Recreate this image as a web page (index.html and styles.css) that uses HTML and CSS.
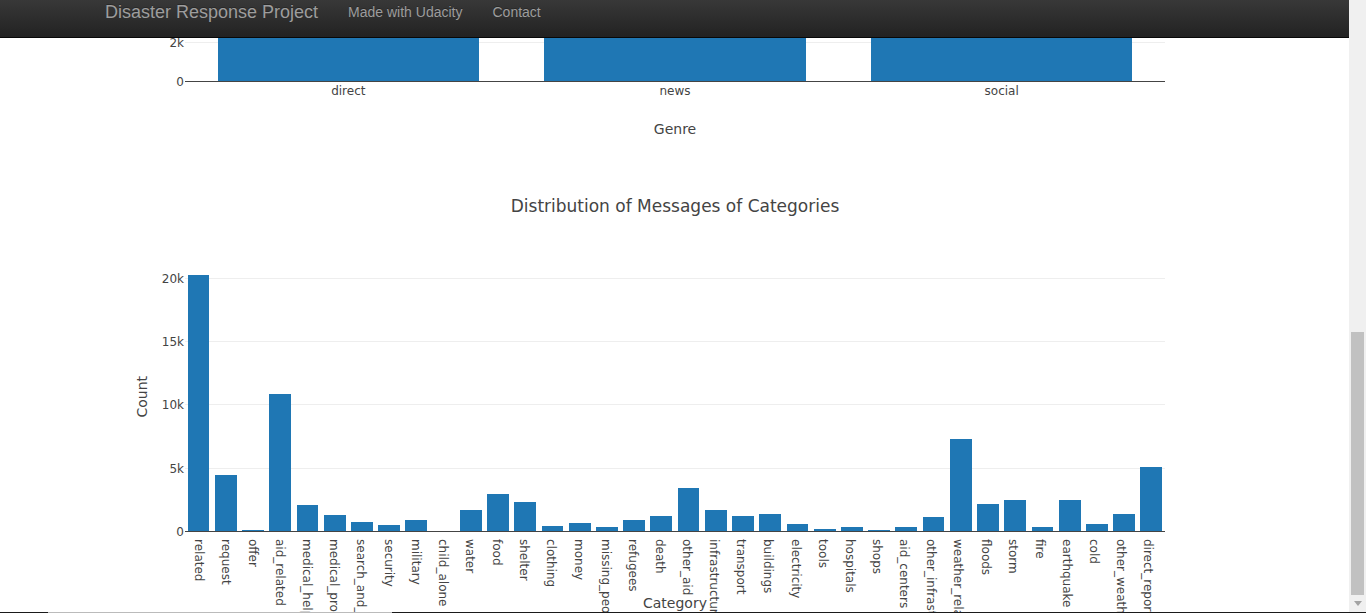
FILE: index.html
```html
<!DOCTYPE html>
<html lang="en">
<head>
<meta charset="utf-8">
<title>Disasters</title>
<link rel="stylesheet" href="styles.css">
</head>
<body>
<div class="window">
  <div class="page">
    <nav class="navbar">
      <div class="container navbar-row">
        <a class="brand" href="#">Disaster Response Project</a>
        <a class="nav-link" href="#">Made with Udacity</a>
        <a class="nav-link" href="#">Contact</a>
      </div>
    </nav>
    <main class="container">
      <section class="chart chart-genre" aria-label="Distribution of Message Genres">
        <div class="scale scale-genre">
          <div class="tick"><span>2k</span></div>
          <div class="tick zero"><span>0</span></div>
        </div>
        <div class="bars bars-genre">
          <i></i><i></i><i></i>
        </div>
        <div class="genre-labels">
          <span>direct</span><span>news</span><span>social</span>
        </div>
        <div class="axis-title genre-title">Genre</div>
      </section>

      <section class="chart chart-category">
        <h2 class="chart-title">Distribution of Messages of Categories</h2>
        <div class="count-title">Count</div>
        <div class="scale scale-category">
          <div class="tick"><span>20k</span></div>
          <div class="tick"><span>15k</span></div>
          <div class="tick"><span>10k</span></div>
          <div class="tick"><span>5k</span></div>
          <div class="tick zero"><span>0</span></div>
        </div>
        <div class="bars bars-category">
          <i style="--v:20240"></i><i style="--v:4440"></i><i style="--v:118"></i><i style="--v:10830"></i>
          <i style="--v:2065"></i><i style="--v:1297"></i><i style="--v:718"></i><i style="--v:467"></i>
          <i style="--v:857"></i><i style="--v:0"></i><i style="--v:1660"></i><i style="--v:2905"></i>
          <i style="--v:2300"></i><i style="--v:401"></i><i style="--v:598"></i><i style="--v:295"></i>
          <i style="--v:869"></i><i style="--v:1184"></i><i style="--v:3417"></i><i style="--v:1690"></i>
          <i style="--v:1194"></i><i style="--v:1326"></i><i style="--v:528"></i><i style="--v:158"></i>
          <i style="--v:280"></i><i style="--v:118"></i><i style="--v:306"></i><i style="--v:1140"></i>
          <i style="--v:7250"></i><i style="--v:2140"></i><i style="--v:2430"></i><i style="--v:280"></i>
          <i style="--v:2441"></i><i style="--v:525"></i><i style="--v:1364"></i><i style="--v:5030"></i>
        </div>
        <div class="category-labels">
          <span>related</span><span>request</span><span>offer</span><span>aid_related</span>
          <span>medical_help</span><span>medical_products</span><span>search_and_rescue</span><span>security</span>
          <span>military</span><span>child_alone</span><span>water</span><span>food</span>
          <span>shelter</span><span>clothing</span><span>money</span><span>missing_people</span>
          <span>refugees</span><span>death</span><span>other_aid</span><span>infrastructure_related</span>
          <span>transport</span><span>buildings</span><span>electricity</span><span>tools</span>
          <span>hospitals</span><span>shops</span><span>aid_centers</span><span>other_infrastructure</span>
          <span>weather_related</span><span>floods</span><span>storm</span><span>fire</span>
          <span>earthquake</span><span>cold</span><span>other_weather</span><span>direct_report</span>
        </div>
        <div class="axis-title category-title">Category</div>
      </section>
    </main>
  </div>
  <div class="scrollbar" aria-hidden="true">
    <div class="track-above"></div>
    <div class="thumb"></div>
    <div class="scroll-down">
      <svg width="8" height="5" viewBox="0 0 8 5"><path d="M0 0h8L4 5z" fill="#a3a3a3"/></svg>
    </div>
  </div>
</div>
<div class="window-edge"></div>
</body>
</html>
```
FILE: styles.css
```css
* {
  box-sizing: border-box;
}

body {
  display: flex;
  flex-direction: column;
  height: 100vh;
  margin: 0;
  overflow: hidden;
  background: #fff;
  color: #444;
  font-family: "DejaVu Sans", Verdana, sans-serif;
  font-size: 12px;
  line-height: 16px;
}

.window {
  display: flex;
  flex: 1;
  min-height: 0;
}

.page {
  flex: 1;
  min-width: 0;
  overflow: hidden;
}

.container {
  max-width: 1171px;
  margin: 0 auto;
  padding: 0 15px 0 16px;
}

/* Navigation */

.navbar {
  border-bottom: 1px solid #080808;
  background: linear-gradient(#383838, #222);
  font-family: "Liberation Sans", Arial, sans-serif;
}

.navbar-row {
  display: flex;
  gap: 30px;
  padding-top: 2px;
  padding-bottom: 15px;
}

.navbar a {
  color: #9d9d9d;
  font-size: 14px;
  line-height: 20px;
  text-decoration: none;
  text-shadow: 0 -1px 0 rgba(0, 0, 0, 0.25);
}

.navbar .brand {
  font-size: 18px;
}

/* Charts */

.chart {
  display: grid;
  grid-template-columns: 80px minmax(0, 1fr) 80px;
  overflow: hidden;
}

.chart-genre {
  grid-template-rows: 44px auto auto;
  padding-bottom: 24px;
}

.chart-category {
  grid-template-rows: 100px 270px 80px;
}

.chart-title {
  grid-area: 1 / 2;
  margin: 0;
  padding-top: 34px;
  font-size: 17px;
  font-weight: 400;
  line-height: 20px;
  text-align: center;
}

.axis-title {
  font-size: 14px;
  line-height: 18px;
  text-align: center;
}

.scale {
  display: grid;
}

.scale-genre {
  grid-area: 1 / 1 / 2 / 3;
  grid-template-rows: 5px 39px;
}

.scale-category {
  grid-area: 2 / 1 / 3 / 3;
  grid-template-rows: 1340fr repeat(4, 5000fr);
}

.tick {
  display: grid;
  grid-template-rows: 100%;
  grid-template-columns: 79px 1px minmax(0, 1fr);
  align-items: end;
}

.tick span {
  margin-bottom: -8px;
  text-align: right;
}

.tick::after {
  grid-column: 3;
  height: 1px;
  background: #eee;
  content: "";
}

.tick.zero::after {
  background: #444;
}

.bars {
  display: grid;
  align-items: end;
  justify-items: center;
  padding-bottom: 1px;
}

.bars i {
  width: 80%;
  background: #1f77b4;
}

.bars-genre {
  grid-area: 1 / 2;
  grid-template-columns: repeat(3, 1fr);
}

.bars-genre i {
  height: 100%;
}

.bars-category {
  grid-area: 2 / 2;
  grid-template-columns: repeat(36, 1fr);
}

.bars-category i {
  height: calc(var(--v) / 21300 * 100%);
}

.genre-labels {
  display: grid;
  grid-area: 2 / 2;
  grid-template-columns: repeat(3, 1fr);
  padding-top: 1px;
  text-align: center;
}

.genre-title {
  grid-area: 3 / 2;
  padding-top: 21px;
}

.category-labels {
  display: grid;
  grid-area: 3 / 2;
  grid-template-columns: repeat(36, minmax(0, 1fr));
  justify-items: center;
  min-height: 0;
  padding-top: 7px;
  padding-right: 3px;
}

.category-labels span,
.count-title {
  white-space: nowrap;
  writing-mode: vertical-rl;
}

.category-title {
  grid-area: 3 / 2;
  align-self: end;
}

.count-title {
  grid-area: 2 / 1;
  align-self: center;
  justify-self: center;
  margin-right: 6px;
  font-size: 14px;
  line-height: 18px;
  transform: rotate(180deg);
}

/* Scrollbar and window edge */

.scrollbar {
  display: flex;
  flex-direction: column;
  width: 17px;
  padding: 0 2px;
  background: #f0f0f0;
}

.track-above {
  flex: 332;
}

.thumb {
  flex: 263;
  background: #c1c1c1;
}

.scroll-down {
  display: flex;
  align-items: center;
  justify-content: center;
  height: 17px;
}

.window-edge {
  height: 1px;
  background: linear-gradient(90deg, #1a1a1a 48px, #bbb 48px, #bbb 392px, #1a1a1a 392px);
}
```
